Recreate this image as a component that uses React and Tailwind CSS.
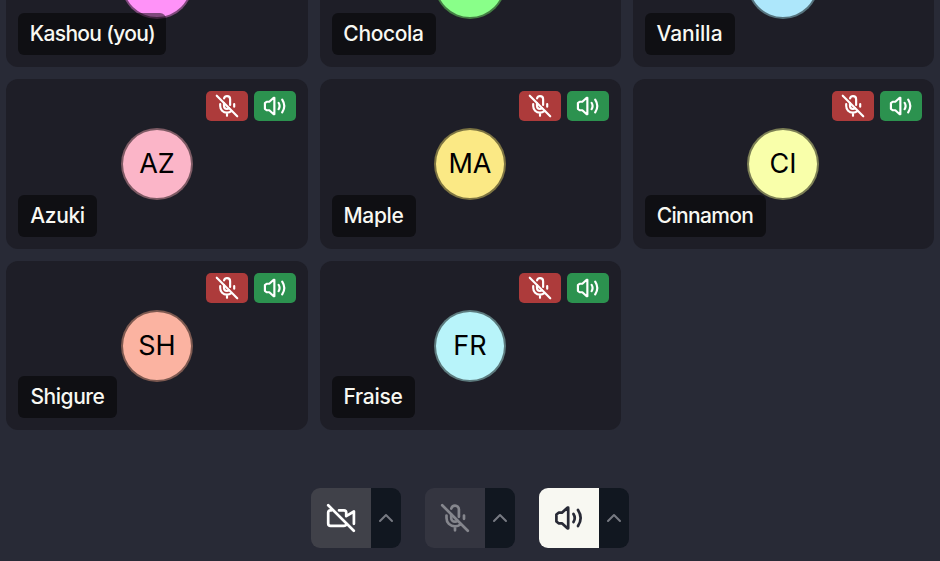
import React from "react";

function MicOff({ size }) {
  return (
    <svg width={size} height={size} viewBox="0 0 30 30" fill="none" stroke="currentColor" strokeWidth="2.7" strokeLinecap="round" strokeLinejoin="round">
      <path d="M11.300 5.500C11.800 3.700 13.200 2.700 15 2.700c2.200 0 3.900 1.700 3.900 3.900v7.200M11.200 11.500v3.200c0 2.300 1.600 4 3.800 4 1 0 1.800-.3 2.500-.9" />
      <path d="M6.500 12.500V15c0 4.700 3.500 8.300 8.500 8.300 2.100 0 4-.7 5.400-1.800M24 12.500v3.300M15 23.500v3.800" />
      <path d="M2.200 2.200l25.600 25.600" />
    </svg>
  );
}

function VideoOff({ size }) {
  return (
    <svg width={size} height={size} viewBox="0 0 30 30" fill="none" stroke="currentColor" strokeWidth="2.7" strokeLinecap="round" strokeLinejoin="round">
      <path d="M5.500 7.300H4.500C2.900 7.300 2.200 8.200 2.200 9.600v10.800c0 1.600.9 2.400 2.400 2.400H18c1 0 1.700-.3 2-.8" />
      <path d="M13 7.300h5c1.400 0 2.200.8 2.200 2.200v3.700l7.700-4.700V20.800" />
      <path d="M2.200 2.200l25.600 25.600" />
    </svg>
  );
}

function Speaker({ size }) {
  return (
    <svg width={size} height={size} viewBox="0 0 30 30" fill="none" stroke="currentColor" strokeWidth="2.7" strokeLinecap="round" strokeLinejoin="round">
      <path d="M14.200 4.700v20.600h-.8L7.900 20.300H4.600l-2.200-1.800v-7l2.200-1.800h3.300l5.500-5z" />
      <path d="M19.500 11c1.500 2.400 1.500 5.600 0 8M24 7c3.300 5 3.300 11 0 16" />
    </svg>
  );
}

function Badges() {
  return (
    <div className="absolute right-3 top-3 flex gap-1.5 text-white">
      <span className="flex h-[30px] w-[42px] items-center justify-center rounded-[5px] bg-[#ad3b3b]"><MicOff size={24} /></span>
      <span className="flex h-[30px] w-[42px] items-center justify-center rounded-[5px] bg-[#2c924f]"><Speaker size={24} /></span>
    </div>
  );
}

const people = [
  { name: "Kashou (you)", initials: "", color: "bg-[#ff92f8]", label: "w-[148px] pl-px tracking-[-0.7px]" },
  { name: "Chocola", initials: "", color: "bg-[#89ff89]", label: "w-[104px] pr-px tracking-[-0.35px]" },
  { name: "Vanilla", initials: "", color: "bg-[#ade7fb]", label: "w-[90px] pr-px" },
  { name: "Azuki", initials: "AZ", color: "bg-[#fbb5c8]", label: "w-[79px] tracking-[-0.4px]" },
  { name: "Maple", initials: "MA", color: "bg-[#fbe985]", label: "w-[84px] pr-px tracking-[-0.3px]" },
  { name: "Cinnamon", initials: "CI", color: "bg-[#f9ffaa]", label: "w-[121px] pr-px tracking-[-0.65px]" },
  { name: "Shigure", initials: "SH", color: "bg-[#fbb3a1]", label: "w-[99px] tracking-[-0.45px]" },
  { name: "Fraise", initials: "FR", color: "bg-[#b8f4fa]", label: "w-[83px] pr-px tracking-[-0.3px]" },
];

function Tile({ person }) {
  return (
    <div className="relative flex items-center justify-center rounded-xl bg-[#1e1e27] nth-[3n+2]:pr-px nth-[3n]:pr-px">
      <div className={`flex size-[72px] items-center justify-center rounded-full border-2 border-black/50 pt-px text-[27px] text-black ${person.color}`}>
        {person.initials}
      </div>
      <Badges />
      <div className={`absolute bottom-3 left-3 flex h-[42px] items-center justify-center whitespace-nowrap rounded-md bg-black/50 text-[21px] font-medium text-[#f8f8f2] ${person.label}`}>
        {person.name}
      </div>
    </div>
  );
}

function Control({ children, tone }) {
  return (
    <div className="flex h-[60px] w-[90px] overflow-hidden rounded-[9px]">
      <button className={`flex w-[60px] items-center justify-center ${tone}`}>{children}</button>
      <button className="flex w-[30px] items-center justify-center bg-[#111720] text-[#777a82]">
        <svg width="16" height="10" viewBox="0 0 16 10" fill="none" stroke="currentColor" strokeWidth="2" strokeLinecap="round" strokeLinejoin="round"><path d="M2 8l6-6 6 6" /></svg>
      </button>
    </div>
  );
}

export default function App() {
  return (
    <main className="flex h-[561px] w-[940px] flex-col justify-end overflow-hidden bg-[#282a36] font-['Inter','Liberation_Sans',sans-serif]">
      <section className="grid shrink-0 grid-cols-[302px_301px_301px] grid-rows-[168px_170px_169px] gap-3 px-1.5">
        {people.map((person) => <Tile key={person.name} person={person} />)}
      </section>
      <nav className="mt-[58px] mb-[13px] flex shrink-0 justify-center gap-6">
        <Control tone="bg-[#404149] text-white"><VideoOff size={30} /></Control>
        <Control tone="bg-[#343540] text-[#85868d]"><MicOff size={30} /></Control>
        <Control tone="bg-[#f8f8f2] text-[#282a36]"><Speaker size={30} /></Control>
      </nav>
    </main>
  );
}
